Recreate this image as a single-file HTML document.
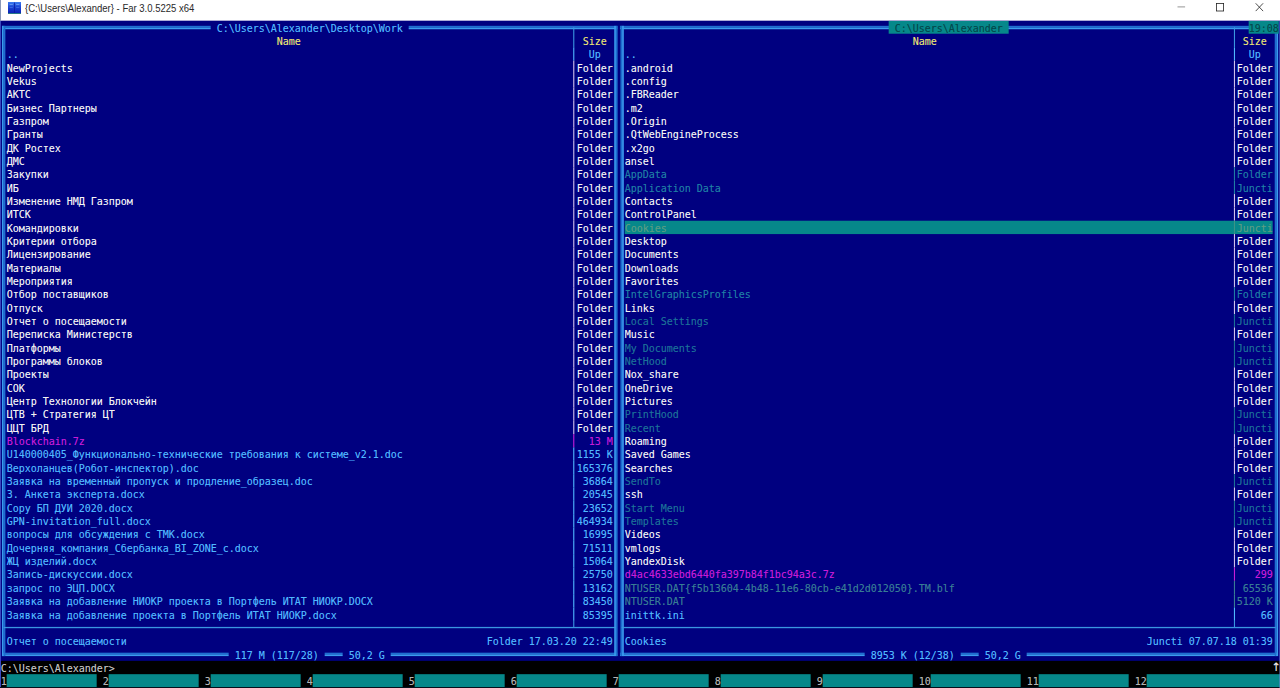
<!DOCTYPE html>
<html lang="ru"><head><meta charset="utf-8"><title>{C:\Users\Alexander} - Far 3.0.5225 x64</title>
<style>
html,body{margin:0;padding:0;background:#fff;overflow:hidden}
#w{position:relative;width:1280px;height:688px;overflow:hidden;background:#fff}
.r{position:absolute}
.t{position:absolute;white-space:pre;height:13.33px;line-height:13.33px;text-shadow:0 0 0.6px color-mix(in srgb,currentColor 45%,transparent);font-family:"DejaVu Sans Mono","Liberation Mono",monospace;font-size:10px;letter-spacing:-0.02px;}
#ttl{position:absolute;left:25.3px;top:0.6px;font-family:"Liberation Sans",sans-serif;font-size:10.8px;line-height:14px;color:#2a2a2a;white-space:pre;transform-origin:0 0;transform:scaleX(0.882)}
</style></head><body><div id="w">
<div id="ttl">{C:\Users\Alexander} - Far 3.0.5225 x64</div>
<svg class="r" style="left:8px;top:1.8px" width="13" height="12.4" viewBox="0 0 13 12.4"><defs><linearGradient id="ig" x1="0" y1="0" x2="0" y2="1"><stop offset="0" stop-color="#3c7cf0"/><stop offset="0.45" stop-color="#1a44d4"/><stop offset="1" stop-color="#0c20b4"/></linearGradient></defs><rect width="13" height="11.4" fill="url(#ig)"/><rect x="6.1" y="0.6" width="0.8" height="10.4" fill="#0c1c9c"/><rect x="1.6" y="2" width="3.2" height="0.9" fill="#78a8f8" opacity="0.8"/><rect x="8.2" y="2" width="3.2" height="0.9" fill="#78a8f8" opacity="0.8"/><rect x="1.6" y="5" width="3.2" height="0.8" fill="#5c8cf0" opacity="0.6"/><rect x="8.2" y="5" width="3.2" height="0.8" fill="#5c8cf0" opacity="0.6"/><rect x="0" y="11.2" width="13" height="1.2" fill="#0a7070"/></svg>
<svg class="r" style="left:1170px;top:0" width="110" height="20" viewBox="0 0 110 20"><path d="M7.5 6.9h7.6" stroke="#8a8a8a" stroke-width="0.9" fill="none"/><rect x="46.4" y="3.4" width="7.2" height="7.6" stroke="#222" stroke-width="0.8" fill="none"/><path d="M85.7 3.3l7.4 7.8M93.1 3.3l-7.4 7.8" stroke="#222" stroke-width="0.8" fill="none"/></svg>
<svg class="r" style="left:0;top:0" width="1280" height="688" viewBox="0 0 1280 688"><rect x="0" y="20.67" width="1280" height="667.33" fill="#000080"/><rect x="0" y="660.85" width="1280" height="27.15" fill="#000"/><rect x="1.97" y="25.84" width="615.4" height="1.7" fill="#1e6ed0"/><rect x="1.97" y="27.54" width="615.4" height="1.7" fill="#3a9cee"/><rect x="1.97" y="652.68" width="615.4" height="1.7" fill="#1e6ed0"/><rect x="1.97" y="654.38" width="615.4" height="1.7" fill="#3a9cee"/><rect x="1.97" y="25.84" width="1.7" height="630.24" fill="#3a9cee"/><rect x="3.67" y="25.84" width="1.7" height="630.24" fill="#1e6ed0"/><rect x="614.22" y="25.84" width="1.7" height="630.24" fill="#3a9cee"/><rect x="615.92" y="25.84" width="1.7" height="630.24" fill="#1e6ed0"/><rect x="573.22" y="27.34" width="1.1" height="20.01" fill="#3a96e0"/><rect x="573.22" y="47.34" width="1.1" height="13.34" fill="#50b8ff"/><rect x="573.22" y="60.68" width="1.1" height="13.34" fill="#d0c0ec"/><rect x="573.22" y="74.02" width="1.1" height="13.34" fill="#d0c0ec"/><rect x="573.22" y="87.36" width="1.1" height="13.34" fill="#d0c0ec"/><rect x="573.22" y="100.69" width="1.1" height="13.34" fill="#d0c0ec"/><rect x="573.22" y="114.03" width="1.1" height="13.34" fill="#d0c0ec"/><rect x="573.22" y="127.37" width="1.1" height="13.34" fill="#d0c0ec"/><rect x="573.22" y="140.7" width="1.1" height="13.34" fill="#d0c0ec"/><rect x="573.22" y="154.04" width="1.1" height="13.34" fill="#d0c0ec"/><rect x="573.22" y="167.38" width="1.1" height="13.34" fill="#d0c0ec"/><rect x="573.22" y="180.71" width="1.1" height="13.34" fill="#d0c0ec"/><rect x="573.22" y="194.05" width="1.1" height="13.34" fill="#d0c0ec"/><rect x="573.22" y="207.39" width="1.1" height="13.34" fill="#d0c0ec"/><rect x="573.22" y="220.73" width="1.1" height="13.34" fill="#d0c0ec"/><rect x="573.22" y="234.06" width="1.1" height="13.34" fill="#d0c0ec"/><rect x="573.22" y="247.4" width="1.1" height="13.34" fill="#d0c0ec"/><rect x="573.22" y="260.74" width="1.1" height="13.34" fill="#d0c0ec"/><rect x="573.22" y="274.07" width="1.1" height="13.34" fill="#d0c0ec"/><rect x="573.22" y="287.41" width="1.1" height="13.34" fill="#d0c0ec"/><rect x="573.22" y="300.75" width="1.1" height="13.34" fill="#d0c0ec"/><rect x="573.22" y="314.08" width="1.1" height="13.34" fill="#d0c0ec"/><rect x="573.22" y="327.42" width="1.1" height="13.34" fill="#d0c0ec"/><rect x="573.22" y="340.76" width="1.1" height="13.34" fill="#d0c0ec"/><rect x="573.22" y="354.1" width="1.1" height="13.34" fill="#d0c0ec"/><rect x="573.22" y="367.43" width="1.1" height="13.34" fill="#d0c0ec"/><rect x="573.22" y="380.77" width="1.1" height="13.34" fill="#d0c0ec"/><rect x="573.22" y="394.11" width="1.1" height="13.34" fill="#d0c0ec"/><rect x="573.22" y="407.44" width="1.1" height="13.34" fill="#d0c0ec"/><rect x="573.22" y="420.78" width="1.1" height="13.34" fill="#d0c0ec"/><rect x="573.22" y="434.12" width="1.1" height="13.34" fill="#c81cd8"/><rect x="573.22" y="447.45" width="1.1" height="13.34" fill="#50b8ff"/><rect x="573.22" y="460.79" width="1.1" height="13.34" fill="#50b8ff"/><rect x="573.22" y="474.13" width="1.1" height="13.34" fill="#50b8ff"/><rect x="573.22" y="487.47" width="1.1" height="13.34" fill="#50b8ff"/><rect x="573.22" y="500.8" width="1.1" height="13.34" fill="#50b8ff"/><rect x="573.22" y="514.14" width="1.1" height="13.34" fill="#50b8ff"/><rect x="573.22" y="527.48" width="1.1" height="13.34" fill="#50b8ff"/><rect x="573.22" y="540.81" width="1.1" height="13.34" fill="#50b8ff"/><rect x="573.22" y="554.15" width="1.1" height="13.34" fill="#50b8ff"/><rect x="573.22" y="567.49" width="1.1" height="13.34" fill="#50b8ff"/><rect x="573.22" y="580.82" width="1.1" height="13.34" fill="#50b8ff"/><rect x="573.22" y="594.16" width="1.1" height="13.34" fill="#50b8ff"/><rect x="573.22" y="607.5" width="1.1" height="13.34" fill="#50b8ff"/><rect x="3.67" y="626.9" width="612" height="1.3" fill="#3a96e0"/><rect x="573.22" y="620.83" width="1.1" height="6.67" fill="#3a96e0"/><rect x="619.97" y="25.84" width="657.4" height="1.7" fill="#1e6ed0"/><rect x="619.97" y="27.54" width="657.4" height="1.7" fill="#3a9cee"/><rect x="619.97" y="652.68" width="657.4" height="1.7" fill="#1e6ed0"/><rect x="619.97" y="654.38" width="657.4" height="1.7" fill="#3a9cee"/><rect x="620.42" y="25.84" width="1.7" height="630.24" fill="#1e6ed0"/><rect x="622.12" y="25.84" width="1.7" height="630.24" fill="#3a9cee"/><rect x="1274.72" y="25.84" width="1.7" height="630.24" fill="#1e6ed0"/><rect x="1276.42" y="25.84" width="1.7" height="630.24" fill="#3a9cee"/><rect x="1233.92" y="27.34" width="1.1" height="20.01" fill="#3a96e0"/><rect x="1233.92" y="47.34" width="1.1" height="13.34" fill="#50b8ff"/><rect x="1233.92" y="60.68" width="1.1" height="13.34" fill="#d0c0ec"/><rect x="1233.92" y="74.02" width="1.1" height="13.34" fill="#d0c0ec"/><rect x="1233.92" y="87.36" width="1.1" height="13.34" fill="#d0c0ec"/><rect x="1233.92" y="100.69" width="1.1" height="13.34" fill="#d0c0ec"/><rect x="1233.92" y="114.03" width="1.1" height="13.34" fill="#d0c0ec"/><rect x="1233.92" y="127.37" width="1.1" height="13.34" fill="#d0c0ec"/><rect x="1233.92" y="140.7" width="1.1" height="13.34" fill="#d0c0ec"/><rect x="1233.92" y="154.04" width="1.1" height="13.34" fill="#d0c0ec"/><rect x="1233.92" y="167.38" width="1.1" height="13.34" fill="#1f7ea4"/><rect x="1233.92" y="180.71" width="1.1" height="13.34" fill="#1f7ea4"/><rect x="1233.92" y="194.05" width="1.1" height="13.34" fill="#d0c0ec"/><rect x="1233.92" y="207.39" width="1.1" height="13.34" fill="#d0c0ec"/><rect x="624.67" y="220.73" width="648" height="13.34" fill="#06888a"/><rect x="1233.92" y="220.73" width="1.1" height="13.34" fill="#3c9488"/><rect x="1233.92" y="234.06" width="1.1" height="13.34" fill="#d0c0ec"/><rect x="1233.92" y="247.4" width="1.1" height="13.34" fill="#d0c0ec"/><rect x="1233.92" y="260.74" width="1.1" height="13.34" fill="#d0c0ec"/><rect x="1233.92" y="274.07" width="1.1" height="13.34" fill="#d0c0ec"/><rect x="1233.92" y="287.41" width="1.1" height="13.34" fill="#1f7ea4"/><rect x="1233.92" y="300.75" width="1.1" height="13.34" fill="#d0c0ec"/><rect x="1233.92" y="314.08" width="1.1" height="13.34" fill="#1c7098"/><rect x="1233.92" y="327.42" width="1.1" height="13.34" fill="#d0c0ec"/><rect x="1233.92" y="340.76" width="1.1" height="13.34" fill="#1c7098"/><rect x="1233.92" y="354.1" width="1.1" height="13.34" fill="#1c7098"/><rect x="1233.92" y="367.43" width="1.1" height="13.34" fill="#d0c0ec"/><rect x="1233.92" y="380.77" width="1.1" height="13.34" fill="#d0c0ec"/><rect x="1233.92" y="394.11" width="1.1" height="13.34" fill="#d0c0ec"/><rect x="1233.92" y="407.44" width="1.1" height="13.34" fill="#1c7098"/><rect x="1233.92" y="420.78" width="1.1" height="13.34" fill="#1c7098"/><rect x="1233.92" y="434.12" width="1.1" height="13.34" fill="#d0c0ec"/><rect x="1233.92" y="447.45" width="1.1" height="13.34" fill="#d0c0ec"/><rect x="1233.92" y="460.79" width="1.1" height="13.34" fill="#d0c0ec"/><rect x="1233.92" y="474.13" width="1.1" height="13.34" fill="#1c7098"/><rect x="1233.92" y="487.47" width="1.1" height="13.34" fill="#d0c0ec"/><rect x="1233.92" y="500.8" width="1.1" height="13.34" fill="#1c7098"/><rect x="1233.92" y="514.14" width="1.1" height="13.34" fill="#1c7098"/><rect x="1233.92" y="527.48" width="1.1" height="13.34" fill="#d0c0ec"/><rect x="1233.92" y="540.81" width="1.1" height="13.34" fill="#d0c0ec"/><rect x="1233.92" y="554.15" width="1.1" height="13.34" fill="#d0c0ec"/><rect x="1233.92" y="567.49" width="1.1" height="13.34" fill="#c81cd8"/><rect x="1233.92" y="580.82" width="1.1" height="13.34" fill="#387c94"/><rect x="1233.92" y="594.16" width="1.1" height="13.34" fill="#387c94"/><rect x="1233.92" y="607.5" width="1.1" height="13.34" fill="#50b8ff"/><rect x="621.67" y="626.9" width="654" height="1.3" fill="#3a96e0"/><rect x="1233.92" y="620.83" width="1.1" height="6.67" fill="#3a96e0"/><rect x="210.67" y="23.67" width="198" height="7.34" fill="#000080"/><rect x="888.67" y="20.97" width="120" height="12.74" fill="#06888a"/><rect x="1248.67" y="20.97" width="30.13" height="12.74" fill="#06888a"/><rect x="228.67" y="650.51" width="96" height="7.34" fill="#000080"/><rect x="342.67" y="650.51" width="48" height="7.34" fill="#000080"/><rect x="864.67" y="650.51" width="96" height="7.34" fill="#000080"/><rect x="978.67" y="650.51" width="48" height="7.34" fill="#000080"/><rect x="6.67" y="674.18" width="90" height="13.82" fill="#06888a"/><rect x="108.67" y="674.18" width="90" height="13.82" fill="#06888a"/><rect x="210.67" y="674.18" width="90" height="13.82" fill="#06888a"/><rect x="312.67" y="674.18" width="90" height="13.82" fill="#06888a"/><rect x="414.67" y="674.18" width="90" height="13.82" fill="#06888a"/><rect x="516.67" y="674.18" width="90" height="13.82" fill="#06888a"/><rect x="618.67" y="674.18" width="90" height="13.82" fill="#06888a"/><rect x="720.67" y="674.18" width="90" height="13.82" fill="#06888a"/><rect x="822.67" y="674.18" width="90" height="13.82" fill="#06888a"/><rect x="930.67" y="674.18" width="90" height="13.82" fill="#06888a"/><rect x="1038.67" y="674.18" width="90" height="13.82" fill="#06888a"/><rect x="1146.67" y="674.18" width="133.33" height="13.82" fill="#06888a"/></svg>
<span class="t" style="left:6.67px;top:48.34px;color:#50b8ff">..</span>
<span class="t" style="left:588.67px;top:48.34px;color:#50b8ff">Up</span>
<span class="t" style="left:6.67px;top:61.68px;color:#f4f4f4">NewProjects</span>
<span class="t" style="left:576.67px;top:61.68px;color:#f4f4f4">Folder</span>
<span class="t" style="left:6.67px;top:75.02px;color:#f4f4f4">Vekus</span>
<span class="t" style="left:576.67px;top:75.02px;color:#f4f4f4">Folder</span>
<span class="t" style="left:6.67px;top:88.36px;color:#f4f4f4">АКТС</span>
<span class="t" style="left:576.67px;top:88.36px;color:#f4f4f4">Folder</span>
<span class="t" style="left:6.67px;top:101.69px;color:#f4f4f4">Бизнес Партнеры</span>
<span class="t" style="left:576.67px;top:101.69px;color:#f4f4f4">Folder</span>
<span class="t" style="left:6.67px;top:115.03px;color:#f4f4f4">Газпром</span>
<span class="t" style="left:576.67px;top:115.03px;color:#f4f4f4">Folder</span>
<span class="t" style="left:6.67px;top:128.37px;color:#f4f4f4">Гранты</span>
<span class="t" style="left:576.67px;top:128.37px;color:#f4f4f4">Folder</span>
<span class="t" style="left:6.67px;top:141.7px;color:#f4f4f4">ДК Ростех</span>
<span class="t" style="left:576.67px;top:141.7px;color:#f4f4f4">Folder</span>
<span class="t" style="left:6.67px;top:155.04px;color:#f4f4f4">ДМС</span>
<span class="t" style="left:576.67px;top:155.04px;color:#f4f4f4">Folder</span>
<span class="t" style="left:6.67px;top:168.38px;color:#f4f4f4">Закупки</span>
<span class="t" style="left:576.67px;top:168.38px;color:#f4f4f4">Folder</span>
<span class="t" style="left:6.67px;top:181.71px;color:#f4f4f4">ИБ</span>
<span class="t" style="left:576.67px;top:181.71px;color:#f4f4f4">Folder</span>
<span class="t" style="left:6.67px;top:195.05px;color:#f4f4f4">Изменение НМД Газпром</span>
<span class="t" style="left:576.67px;top:195.05px;color:#f4f4f4">Folder</span>
<span class="t" style="left:6.67px;top:208.39px;color:#f4f4f4">ИТСК</span>
<span class="t" style="left:576.67px;top:208.39px;color:#f4f4f4">Folder</span>
<span class="t" style="left:6.67px;top:221.73px;color:#f4f4f4">Командировки</span>
<span class="t" style="left:576.67px;top:221.73px;color:#f4f4f4">Folder</span>
<span class="t" style="left:6.67px;top:235.06px;color:#f4f4f4">Критерии отбора</span>
<span class="t" style="left:576.67px;top:235.06px;color:#f4f4f4">Folder</span>
<span class="t" style="left:6.67px;top:248.4px;color:#f4f4f4">Лицензирование</span>
<span class="t" style="left:576.67px;top:248.4px;color:#f4f4f4">Folder</span>
<span class="t" style="left:6.67px;top:261.74px;color:#f4f4f4">Материалы</span>
<span class="t" style="left:576.67px;top:261.74px;color:#f4f4f4">Folder</span>
<span class="t" style="left:6.67px;top:275.07px;color:#f4f4f4">Мероприятия</span>
<span class="t" style="left:576.67px;top:275.07px;color:#f4f4f4">Folder</span>
<span class="t" style="left:6.67px;top:288.41px;color:#f4f4f4">Отбор поставщиков</span>
<span class="t" style="left:576.67px;top:288.41px;color:#f4f4f4">Folder</span>
<span class="t" style="left:6.67px;top:301.75px;color:#f4f4f4">Отпуск</span>
<span class="t" style="left:576.67px;top:301.75px;color:#f4f4f4">Folder</span>
<span class="t" style="left:6.67px;top:315.08px;color:#f4f4f4">Отчет о посещаемости</span>
<span class="t" style="left:576.67px;top:315.08px;color:#f4f4f4">Folder</span>
<span class="t" style="left:6.67px;top:328.42px;color:#f4f4f4">Переписка Министерств</span>
<span class="t" style="left:576.67px;top:328.42px;color:#f4f4f4">Folder</span>
<span class="t" style="left:6.67px;top:341.76px;color:#f4f4f4">Платформы</span>
<span class="t" style="left:576.67px;top:341.76px;color:#f4f4f4">Folder</span>
<span class="t" style="left:6.67px;top:355.1px;color:#f4f4f4">Программы блоков</span>
<span class="t" style="left:576.67px;top:355.1px;color:#f4f4f4">Folder</span>
<span class="t" style="left:6.67px;top:368.43px;color:#f4f4f4">Проекты</span>
<span class="t" style="left:576.67px;top:368.43px;color:#f4f4f4">Folder</span>
<span class="t" style="left:6.67px;top:381.77px;color:#f4f4f4">СОК</span>
<span class="t" style="left:576.67px;top:381.77px;color:#f4f4f4">Folder</span>
<span class="t" style="left:6.67px;top:395.11px;color:#f4f4f4">Центр Технологии Блокчейн</span>
<span class="t" style="left:576.67px;top:395.11px;color:#f4f4f4">Folder</span>
<span class="t" style="left:6.67px;top:408.44px;color:#f4f4f4">ЦТВ + Стратегия ЦТ</span>
<span class="t" style="left:576.67px;top:408.44px;color:#f4f4f4">Folder</span>
<span class="t" style="left:6.67px;top:421.78px;color:#f4f4f4">ЦЦТ БРД</span>
<span class="t" style="left:576.67px;top:421.78px;color:#f4f4f4">Folder</span>
<span class="t" style="left:6.67px;top:435.12px;color:#c81cd8">Blockchain.7z</span>
<span class="t" style="left:588.67px;top:435.12px;color:#c81cd8">13 M</span>
<span class="t" style="left:6.67px;top:448.45px;color:#50b8ff">U140000405_Функционально-технические требования к системе_v2.1.doc</span>
<span class="t" style="left:576.67px;top:448.45px;color:#50b8ff">1155 K</span>
<span class="t" style="left:6.67px;top:461.79px;color:#50b8ff">Верхоланцев(Робот-инспектор).doc</span>
<span class="t" style="left:576.67px;top:461.79px;color:#50b8ff">165376</span>
<span class="t" style="left:6.67px;top:475.13px;color:#50b8ff">Заявка на временный пропуск и продление_образец.doc</span>
<span class="t" style="left:582.67px;top:475.13px;color:#50b8ff">36864</span>
<span class="t" style="left:6.67px;top:488.47px;color:#50b8ff">3. Анкета эксперта.docx</span>
<span class="t" style="left:582.67px;top:488.47px;color:#50b8ff">20545</span>
<span class="t" style="left:6.67px;top:501.8px;color:#50b8ff">Copy БП ДУИ 2020.docx</span>
<span class="t" style="left:582.67px;top:501.8px;color:#50b8ff">23652</span>
<span class="t" style="left:6.67px;top:515.14px;color:#50b8ff">GPN-invitation_full.docx</span>
<span class="t" style="left:576.67px;top:515.14px;color:#50b8ff">464934</span>
<span class="t" style="left:6.67px;top:528.48px;color:#50b8ff">вопросы для обсуждения с ТМК.docx</span>
<span class="t" style="left:582.67px;top:528.48px;color:#50b8ff">16995</span>
<span class="t" style="left:6.67px;top:541.81px;color:#50b8ff">Дочерняя_компания_Сбербанка_BI_ZONE_с.docx</span>
<span class="t" style="left:582.67px;top:541.81px;color:#50b8ff">71511</span>
<span class="t" style="left:6.67px;top:555.15px;color:#50b8ff">ЖЦ изделий.docx</span>
<span class="t" style="left:582.67px;top:555.15px;color:#50b8ff">15064</span>
<span class="t" style="left:6.67px;top:568.49px;color:#50b8ff">Запись-дискуссии.docx</span>
<span class="t" style="left:582.67px;top:568.49px;color:#50b8ff">25750</span>
<span class="t" style="left:6.67px;top:581.82px;color:#50b8ff">запрос по ЭЦП.DOCX</span>
<span class="t" style="left:582.67px;top:581.82px;color:#50b8ff">13162</span>
<span class="t" style="left:6.67px;top:595.16px;color:#50b8ff">Заявка на добавление НИОКР проекта в Портфель ИТАТ НИОКР.DOCX</span>
<span class="t" style="left:582.67px;top:595.16px;color:#50b8ff">83450</span>
<span class="t" style="left:6.67px;top:608.5px;color:#50b8ff">Заявка на добавление проекта в Портфель ИТАТ НИОКР.docx</span>
<span class="t" style="left:582.67px;top:608.5px;color:#50b8ff">85395</span>
<span class="t" style="left:276.67px;top:35.01px;color:#e8e074">Name</span>
<span class="t" style="left:582.67px;top:35.01px;color:#e8e074">Size</span>
<span class="t" style="left:624.67px;top:48.34px;color:#50b8ff">..</span>
<span class="t" style="left:1248.67px;top:48.34px;color:#50b8ff">Up</span>
<span class="t" style="left:624.67px;top:61.68px;color:#f4f4f4">.android</span>
<span class="t" style="left:1236.67px;top:61.68px;color:#f4f4f4">Folder</span>
<span class="t" style="left:624.67px;top:75.02px;color:#f4f4f4">.config</span>
<span class="t" style="left:1236.67px;top:75.02px;color:#f4f4f4">Folder</span>
<span class="t" style="left:624.67px;top:88.36px;color:#f4f4f4">.FBReader</span>
<span class="t" style="left:1236.67px;top:88.36px;color:#f4f4f4">Folder</span>
<span class="t" style="left:624.67px;top:101.69px;color:#f4f4f4">.m2</span>
<span class="t" style="left:1236.67px;top:101.69px;color:#f4f4f4">Folder</span>
<span class="t" style="left:624.67px;top:115.03px;color:#f4f4f4">.Origin</span>
<span class="t" style="left:1236.67px;top:115.03px;color:#f4f4f4">Folder</span>
<span class="t" style="left:624.67px;top:128.37px;color:#f4f4f4">.QtWebEngineProcess</span>
<span class="t" style="left:1236.67px;top:128.37px;color:#f4f4f4">Folder</span>
<span class="t" style="left:624.67px;top:141.7px;color:#f4f4f4">.x2go</span>
<span class="t" style="left:1236.67px;top:141.7px;color:#f4f4f4">Folder</span>
<span class="t" style="left:624.67px;top:155.04px;color:#f4f4f4">ansel</span>
<span class="t" style="left:1236.67px;top:155.04px;color:#f4f4f4">Folder</span>
<span class="t" style="left:624.67px;top:168.38px;color:#1f7ea4">AppData</span>
<span class="t" style="left:1236.67px;top:168.38px;color:#1f7ea4">Folder</span>
<span class="t" style="left:624.67px;top:181.71px;color:#1f7ea4">Application Data</span>
<span class="t" style="left:1236.67px;top:181.71px;color:#1f7ea4">Juncti</span>
<span class="t" style="left:624.67px;top:195.05px;color:#f4f4f4">Contacts</span>
<span class="t" style="left:1236.67px;top:195.05px;color:#f4f4f4">Folder</span>
<span class="t" style="left:624.67px;top:208.39px;color:#f4f4f4">ControlPanel</span>
<span class="t" style="left:1236.67px;top:208.39px;color:#f4f4f4">Folder</span>
<span class="t" style="left:624.67px;top:221.73px;color:#5a9c84">Cookies</span>
<span class="t" style="left:1236.67px;top:221.73px;color:#5a9c84">Juncti</span>
<span class="t" style="left:624.67px;top:235.06px;color:#f4f4f4">Desktop</span>
<span class="t" style="left:1236.67px;top:235.06px;color:#f4f4f4">Folder</span>
<span class="t" style="left:624.67px;top:248.4px;color:#f4f4f4">Documents</span>
<span class="t" style="left:1236.67px;top:248.4px;color:#f4f4f4">Folder</span>
<span class="t" style="left:624.67px;top:261.74px;color:#f4f4f4">Downloads</span>
<span class="t" style="left:1236.67px;top:261.74px;color:#f4f4f4">Folder</span>
<span class="t" style="left:624.67px;top:275.07px;color:#f4f4f4">Favorites</span>
<span class="t" style="left:1236.67px;top:275.07px;color:#f4f4f4">Folder</span>
<span class="t" style="left:624.67px;top:288.41px;color:#1f7ea4">IntelGraphicsProfiles</span>
<span class="t" style="left:1236.67px;top:288.41px;color:#1f7ea4">Folder</span>
<span class="t" style="left:624.67px;top:301.75px;color:#f4f4f4">Links</span>
<span class="t" style="left:1236.67px;top:301.75px;color:#f4f4f4">Folder</span>
<span class="t" style="left:624.67px;top:315.08px;color:#1c7098">Local Settings</span>
<span class="t" style="left:1236.67px;top:315.08px;color:#1c7098">Juncti</span>
<span class="t" style="left:624.67px;top:328.42px;color:#f4f4f4">Music</span>
<span class="t" style="left:1236.67px;top:328.42px;color:#f4f4f4">Folder</span>
<span class="t" style="left:624.67px;top:341.76px;color:#1c7098">My Documents</span>
<span class="t" style="left:1236.67px;top:341.76px;color:#1c7098">Juncti</span>
<span class="t" style="left:624.67px;top:355.1px;color:#1c7098">NetHood</span>
<span class="t" style="left:1236.67px;top:355.1px;color:#1c7098">Juncti</span>
<span class="t" style="left:624.67px;top:368.43px;color:#f4f4f4">Nox_share</span>
<span class="t" style="left:1236.67px;top:368.43px;color:#f4f4f4">Folder</span>
<span class="t" style="left:624.67px;top:381.77px;color:#f4f4f4">OneDrive</span>
<span class="t" style="left:1236.67px;top:381.77px;color:#f4f4f4">Folder</span>
<span class="t" style="left:624.67px;top:395.11px;color:#f4f4f4">Pictures</span>
<span class="t" style="left:1236.67px;top:395.11px;color:#f4f4f4">Folder</span>
<span class="t" style="left:624.67px;top:408.44px;color:#1c7098">PrintHood</span>
<span class="t" style="left:1236.67px;top:408.44px;color:#1c7098">Juncti</span>
<span class="t" style="left:624.67px;top:421.78px;color:#1c7098">Recent</span>
<span class="t" style="left:1236.67px;top:421.78px;color:#1c7098">Juncti</span>
<span class="t" style="left:624.67px;top:435.12px;color:#f4f4f4">Roaming</span>
<span class="t" style="left:1236.67px;top:435.12px;color:#f4f4f4">Folder</span>
<span class="t" style="left:624.67px;top:448.45px;color:#f4f4f4">Saved Games</span>
<span class="t" style="left:1236.67px;top:448.45px;color:#f4f4f4">Folder</span>
<span class="t" style="left:624.67px;top:461.79px;color:#f4f4f4">Searches</span>
<span class="t" style="left:1236.67px;top:461.79px;color:#f4f4f4">Folder</span>
<span class="t" style="left:624.67px;top:475.13px;color:#1c7098">SendTo</span>
<span class="t" style="left:1236.67px;top:475.13px;color:#1c7098">Juncti</span>
<span class="t" style="left:624.67px;top:488.47px;color:#f4f4f4">ssh</span>
<span class="t" style="left:1236.67px;top:488.47px;color:#f4f4f4">Folder</span>
<span class="t" style="left:624.67px;top:501.8px;color:#1c7098">Start Menu</span>
<span class="t" style="left:1236.67px;top:501.8px;color:#1c7098">Juncti</span>
<span class="t" style="left:624.67px;top:515.14px;color:#1c7098">Templates</span>
<span class="t" style="left:1236.67px;top:515.14px;color:#1c7098">Juncti</span>
<span class="t" style="left:624.67px;top:528.48px;color:#f4f4f4">Videos</span>
<span class="t" style="left:1236.67px;top:528.48px;color:#f4f4f4">Folder</span>
<span class="t" style="left:624.67px;top:541.81px;color:#f4f4f4">vmlogs</span>
<span class="t" style="left:1236.67px;top:541.81px;color:#f4f4f4">Folder</span>
<span class="t" style="left:624.67px;top:555.15px;color:#f4f4f4">YandexDisk</span>
<span class="t" style="left:1236.67px;top:555.15px;color:#f4f4f4">Folder</span>
<span class="t" style="left:624.67px;top:568.49px;color:#c81cd8">d4ac4633ebd6440fa397b84f1bc94a3c.7z</span>
<span class="t" style="left:1254.67px;top:568.49px;color:#c81cd8">299</span>
<span class="t" style="left:624.67px;top:581.82px;color:#387c94">NTUSER.DAT{f5b13604-4b48-11e6-80cb-e41d2d012050}.TM.blf</span>
<span class="t" style="left:1242.67px;top:581.82px;color:#387c94">65536</span>
<span class="t" style="left:624.67px;top:595.16px;color:#387c94">NTUSER.DAT</span>
<span class="t" style="left:1236.67px;top:595.16px;color:#387c94">5120 K</span>
<span class="t" style="left:624.67px;top:608.5px;color:#50b8ff">inittk.ini</span>
<span class="t" style="left:1260.67px;top:608.5px;color:#50b8ff">66</span>
<span class="t" style="left:912.67px;top:35.01px;color:#e8e074">Name</span>
<span class="t" style="left:1242.67px;top:35.01px;color:#e8e074">Size</span>
<span class="t" style="left:216.67px;top:21.67px;color:#50b8ff">C:\Users\Alexander\Desktop\Work</span>
<span class="t" style="left:894.67px;top:21.67px;color:#04484c">C:\Users\Alexander</span>
<span class="t" style="left:1248.67px;top:21.67px;color:#04484c">19:08</span>
<span class="t" style="left:6.67px;top:635.17px;color:#50b8ff">Отчет о посещаемости</span>
<span class="t" style="left:486.67px;top:635.17px;color:#50b8ff">Folder 17.03.20 22:49</span>
<span class="t" style="left:624.67px;top:635.17px;color:#50b8ff">Cookies</span>
<span class="t" style="left:1146.67px;top:635.17px;color:#50b8ff">Juncti 07.07.18 01:39</span>
<span class="t" style="left:234.67px;top:648.51px;color:#50b8ff">117 M (117/28)</span>
<span class="t" style="left:348.67px;top:648.51px;color:#50b8ff">50,2 G</span>
<span class="t" style="left:870.67px;top:648.51px;color:#50b8ff">8953 K (12/38)</span>
<span class="t" style="left:984.67px;top:648.51px;color:#50b8ff">50,2 G</span>
<span class="t" style="left:0.67px;top:661.85px;color:#c4c4c4">C:\Users\Alexander&gt;</span>
<span class="t" style="left:1271.6px;top:661.25px;color:#ece4e4;font-family:'DejaVu Sans','Liberation Sans',sans-serif;font-size:11.5px;width:8px;text-align:center;letter-spacing:0">↑</span>
<span class="t" style="left:0.67px;top:675.18px;color:#b4b4b4">1</span>
<span class="t" style="left:102.67px;top:675.18px;color:#b4b4b4">2</span>
<span class="t" style="left:204.67px;top:675.18px;color:#b4b4b4">3</span>
<span class="t" style="left:306.67px;top:675.18px;color:#b4b4b4">4</span>
<span class="t" style="left:408.67px;top:675.18px;color:#b4b4b4">5</span>
<span class="t" style="left:510.67px;top:675.18px;color:#b4b4b4">6</span>
<span class="t" style="left:612.67px;top:675.18px;color:#b4b4b4">7</span>
<span class="t" style="left:714.67px;top:675.18px;color:#b4b4b4">8</span>
<span class="t" style="left:816.67px;top:675.18px;color:#b4b4b4">9</span>
<span class="t" style="left:918.67px;top:675.18px;color:#b4b4b4">10</span>
<span class="t" style="left:1026.67px;top:675.18px;color:#b4b4b4">11</span>
<span class="t" style="left:1134.67px;top:675.18px;color:#b4b4b4">12</span>
<div class="r" style="left:0;top:0;width:0.8px;height:20.5px;background:#8a98b8"></div>
<div class="r" style="left:0;top:20.5px;width:0.8px;height:668px;background:#3a48c0"></div>
<div class="r" style="left:0;top:687.3px;width:1280px;height:0.7px;background:#04101c"></div>
<div class="r" style="left:1279px;top:20.5px;width:1px;height:668px;background:rgba(120,140,230,0.45)"></div>
</div></body></html>
